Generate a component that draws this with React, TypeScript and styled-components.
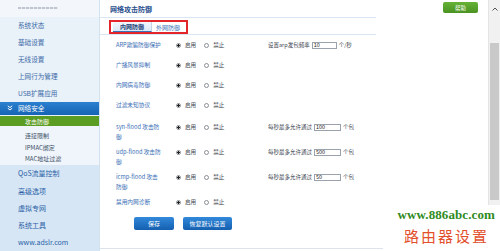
import React from "react";
import styled, { createGlobalStyle } from "styled-components";

const GlobalStyle = createGlobalStyle`
  html, body {
    margin: 0;
    padding: 0;
    width: 500px;
    height: 251px;
    overflow: hidden;
    background: #ffffff;
    font-family: "Noto Sans CJK SC", "Noto Sans", sans-serif;
  }
  * {
    box-sizing: border-box;
  }
`;

const Page = styled.div`
  position: relative;
  display: flex;
  width: 500px;
  height: 251px;
`;

/* ---------- sidebar ---------- */

const Sidebar = styled.div`
  width: 100px;
  display: flex;
  flex-direction: column;
  background: #e9f1f9;
  border-right: 1px solid #d3e2f1;
`;

const SideTop = styled.div`
  height: 17px;
  display: flex;
  align-items: center;
  padding-left: 18px;
  background: #f3f7fb;
`;

const FaintLine = styled.div`
  width: 40px;
  height: 2px;
  background: repeating-linear-gradient(90deg, #bfc6cf 0 3px, #e3e7ec 3px 4px);
`;

const NavItem = styled.div<{ $lower?: boolean }>`
  height: 17.3px;
  display: flex;
  align-items: center;
  padding-left: 18px;
  font-size: ${(p) => (p.$lower ? "7px" : "6.6px")};
  color: ${(p) => (p.$lower ? "#2a5fa6" : "#3b6aa6")};
  white-space: nowrap;
`;

const GroupHead = styled.div`
  height: 14px;
  display: flex;
  align-items: center;
  gap: 5px;
  padding-left: 7px;
  background: linear-gradient(#2a80cf, #1764b4);
  color: #ffffff;
  font-size: 6.6px;
  margin-bottom: 1px;
`;

const SubActive = styled.div`
  height: 10px;
  display: flex;
  align-items: center;
  padding-left: 25px;
  background: #5b9c22;
  color: #ffffff;
  font-size: 6px;
`;

const SubList = styled.div`
  padding-top: 4px;
  background: #eff5fb;
`;

const SubItem = styled.div`
  height: 11.5px;
  display: flex;
  align-items: center;
  padding-left: 25px;
  font-size: 6px;
  color: #3d4f66;
  white-space: nowrap;
`;

const LowerNav = styled.div`
  flex: 1;
  background: #d6e6f5;
`;

/* ---------- main ---------- */

const Main = styled.div`
  flex: 1;
  display: flex;
  flex-direction: column;
  background: #ffffff;
`;

const HeaderRow = styled.div`
  display: flex;
  align-items: flex-start;
`;

const HeadBlock = styled.div`
  width: 276px;
`;

const Title = styled.div`
  height: 18px;
  padding-left: 10px;
  display: flex;
  align-items: center;
  font-size: 7px;
  font-weight: 700;
  color: #1f4d8c;
  border-bottom: 1px solid #d9e6f3;
`;

const TabRow = styled.div`
  display: flex;
  align-items: flex-start;
  height: 17px;
  padding: 2px 0 0 9px;
  border-bottom: 1px solid #d9e6f3;
`;

const TabFrame = styled.div`
  display: flex;
  align-items: stretch;
  height: 14px;
  border: 2px solid #e2262b;
  padding: 0 2px;
`;

const Tab = styled.div<{ $active?: boolean }>`
  display: flex;
  align-items: center;
  padding: 0 ${(p) => (p.$active ? "7px" : "4px")};
  font-size: 6px;
  font-weight: ${(p) => (p.$active ? 700 : 400)};
  color: ${(p) => (p.$active ? "#1d3f75" : "#3a72b8")};
  background: ${(p) => (p.$active ? "linear-gradient(#f4f8fd, #dbe8f6)" : "transparent")};
  border-bottom: ${(p) => (p.$active ? "1px solid #3a72b8" : "none")};
  border-right: ${(p) => (p.$active ? "1px solid #c3d4e8" : "none")};
`;

const HelpButton = styled.div`
  margin: 2px 10px 0 auto;
  width: 35px;
  height: 11px;
  border-radius: 2px;
  background: linear-gradient(#66b236, #4a9322);
  color: #ffffff;
  font-size: 5.5px;
  display: flex;
  align-items: center;
  justify-content: center;
`;

const Rows = styled.div`
  padding-left: 16px;
  display: flex;
  flex-direction: column;
`;

const Row = styled.div<{ $tall?: boolean; $top?: boolean }>`
  display: grid;
  grid-template-columns: 60px 92px auto;
  height: ${(p) => (p.$tall ? "25px" : "20px")};
  padding-top: ${(p) => (p.$top ? "7px" : "0")};
  align-items: ${(p) => (p.$top ? "start" : "center")};
`;

const Label = styled.div`
  width: 46px;
  font-size: 5.7px;
  line-height: 10px;
  color: #3b6fb6;
`;

const RadioGroup = styled.div`
  display: flex;
  align-items: center;
  height: 10px;
  font-size: 5.6px;
  color: #444a52;
`;

const Radio = styled.span<{ $checked?: boolean }>`
  width: 5px;
  height: 5px;
  border-radius: 50%;
  border: 1px solid #8a8f96;
  background: ${(p) => (p.$checked ? "radial-gradient(circle, #222 0 1.2px, #fff 1.4px)" : "#fff")};
  margin-right: 4px;
`;

const RadioText = styled.span`
  margin-right: 8px;
`;

const Setting = styled.div`
  display: flex;
  align-items: center;
  height: 10px;
  font-size: 5.5px;
  color: #3d4450;
  white-space: nowrap;
`;

const Field = styled.span<{ $w: number }>`
  display: inline-flex;
  align-items: center;
  width: ${(p) => p.$w}px;
  height: 7px;
  margin: 0 2px 0 2px;
  padding-left: 1px;
  border: 1px solid #9aa3ad;
  font-size: 5.5px;
  color: #222;
`;

const Buttons = styled.div`
  display: flex;
  gap: 9px;
  padding-left: 34px;
  margin-top: 7px;
`;

const BlueButton = styled.div<{ $w: number }>`
  width: ${(p) => p.$w}px;
  height: 13px;
  border-radius: 2px;
  background: linear-gradient(#3289db, #145fb0);
  color: #ffffff;
  font-size: 6px;
  display: flex;
  align-items: center;
  justify-content: center;
`;

const Spacer = styled.div`
  flex: 1;
`;

const BottomLine = styled.div`
  height: 1px;
  margin-bottom: 2px;
  background: #dde3ea;
`;

/* ---------- scrollbar ---------- */

const Scrollbar = styled.div`
  width: 12px;
  display: flex;
  flex-direction: column;
  background: #f1f1f1;
  border-left: 1px solid #e4e4e4;
`;

const ArrowBox = styled.div`
  height: 17px;
  display: flex;
  align-items: center;
  justify-content: center;
`;

const Track = styled.div`
  flex: 1;
  padding: 26px 1px 0;
`;

const Thumb = styled.div`
  height: 157px;
  background: #c9c9c9;
`;

/* ---------- watermark ---------- */

const Watermark = styled.div`
  position: absolute;
  left: 383px;
  top: 205px;
  right: 0;
  bottom: 0;
  background: #ffffff;
  display: flex;
  flex-direction: column;
  align-items: flex-end;
  padding-right: 5px;
`;

const WaterUrl = styled.div`
  margin-top: 3px;
  font-family: "Liberation Serif", serif;
  font-weight: 700;
  font-size: 13px;
  line-height: 14px;
  color: #2f8a22;
  letter-spacing: 0.1px;
`;

const WaterName = styled.div`
  margin-top: 5px;
  margin-right: 6px;
  font-size: 15px;
  line-height: 17px;
  letter-spacing: 2px;
  color: #e2502c;
`;

const rows = [
  { label: "ARP欺骗防御保护", setting: { text: "设置arp发包频率", value: "10", w: 25, unit: "个/秒" } },
  { label: "广播风暴抑制" },
  { label: "内网病毒防御" },
  { label: "过滤未知协议" },
  { label: "syn-flood 攻击防御", tall: true, setting: { text: "每秒最多允许通过", value: "100", w: 27, unit: "个包" } },
  { label: "udp-flood 攻击防御", tall: true, setting: { text: "每秒最多允许通过", value: "500", w: 27, unit: "个包" } },
  { label: "icmp-flood 攻击防御", tall: true, setting: { text: "每秒最多允许通过", value: "50", w: 27, unit: "个包" } },
  { label: "禁用内网诊断", top: true },
];

function GroupIcon() {
  return (
    <svg width="6" height="6" viewBox="0 0 6 6">
      <path d="M0.8 0.8 L3 2.6 L5.2 0.8 M0.8 3.2 L3 5 L5.2 3.2" stroke="#fff" strokeWidth="1" fill="none" />
    </svg>
  );
}

function App() {
  return (
    <>
      <GlobalStyle />
      <Page>
        <Sidebar>
          <SideTop>
            <FaintLine />
          </SideTop>
          <NavItem>系统状态</NavItem>
          <NavItem>基础设置</NavItem>
          <NavItem>无线设置</NavItem>
          <NavItem>上网行为管理</NavItem>
          <NavItem>USB扩展应用</NavItem>
          <GroupHead>
            <GroupIcon />
            网络安全
          </GroupHead>
          <SubActive>攻击防御</SubActive>
          <SubList>
            <SubItem>连接限制</SubItem>
            <SubItem>IPMAC绑定</SubItem>
            <SubItem>MAC地址过滤</SubItem>
          </SubList>
          <LowerNav>
            <NavItem $lower>QoS流量控制</NavItem>
            <NavItem $lower>高级选项</NavItem>
            <NavItem $lower>虚拟专网</NavItem>
            <NavItem $lower>系统工具</NavItem>
            <NavItem $lower>www.adslr.com</NavItem>
          </LowerNav>
        </Sidebar>

        <Main>
          <HeaderRow>
            <HeadBlock>
              <Title>网络攻击防御</Title>
              <TabRow>
                <TabFrame>
                  <Tab $active>内网防御</Tab>
                  <Tab>外网防御</Tab>
                </TabFrame>
              </TabRow>
            </HeadBlock>
            <HelpButton>帮助</HelpButton>
          </HeaderRow>

          <Rows>
            {rows.map((r) => (
              <Row key={r.label} $tall={r.tall} $top={r.tall || r.top}>
                <Label>{r.label}</Label>
                <RadioGroup>
                  <Radio $checked />
                  <RadioText>启用</RadioText>
                  <Radio />
                  <RadioText>禁止</RadioText>
                </RadioGroup>
                {r.setting ? (
                  <Setting>
                    {r.setting.text}
                    <Field $w={r.setting.w}>{r.setting.value}</Field>
                    {r.setting.unit}
                  </Setting>
                ) : (
                  <span />
                )}
              </Row>
            ))}
          </Rows>

          <Buttons>
            <BlueButton $w={40}>保存</BlueButton>
            <BlueButton $w={49}>恢复默认设置</BlueButton>
          </Buttons>
          <Spacer />
          <BottomLine />
        </Main>

        <Scrollbar>
          <ArrowBox>
            <svg width="6" height="4" viewBox="0 0 6 4">
              <path d="M0.5 3.5 L3 1 L5.5 3.5" stroke="#555" strokeWidth="1" fill="none" />
            </svg>
          </ArrowBox>
          <Track>
            <Thumb />
          </Track>
        </Scrollbar>

        <Watermark>
          <WaterUrl>www.886abc.com</WaterUrl>
          <WaterName>路由器设置</WaterName>
        </Watermark>
      </Page>
    </>
  );
}

export default App;
